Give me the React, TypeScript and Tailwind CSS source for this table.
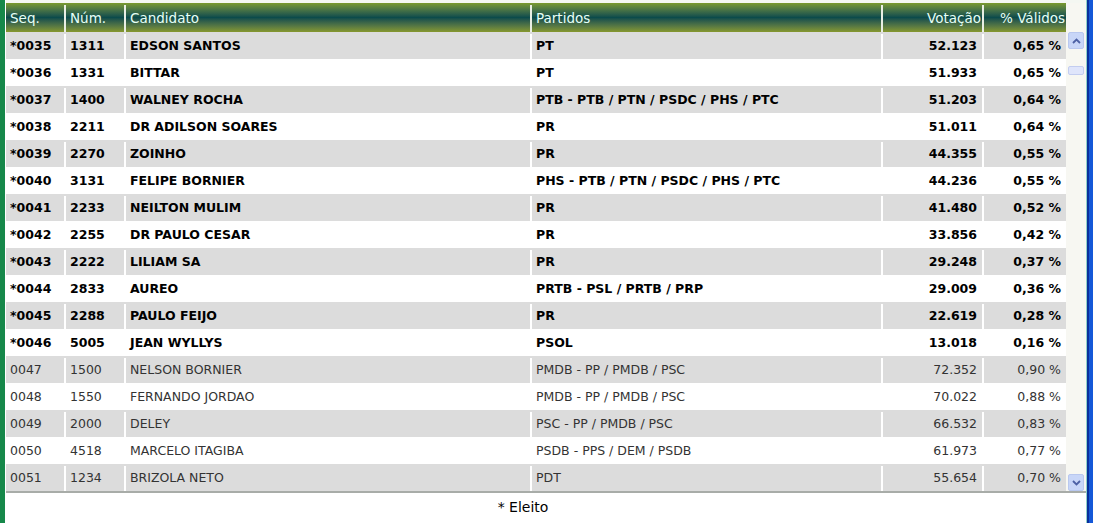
import React from "react";

type Row = {
  seq: string;
  num: string;
  nome: string;
  partido: string;
  votos: string;
  pct: string;
  eleito: boolean;
};

const rows: Row[] = [
  { seq: "*0035", num: "1311", nome: "EDSON SANTOS", partido: "PT", votos: "52.123", pct: "0,65 %", eleito: true },
  { seq: "*0036", num: "1331", nome: "BITTAR", partido: "PT", votos: "51.933", pct: "0,65 %", eleito: true },
  { seq: "*0037", num: "1400", nome: "WALNEY ROCHA", partido: "PTB - PTB / PTN / PSDC / PHS / PTC", votos: "51.203", pct: "0,64 %", eleito: true },
  { seq: "*0038", num: "2211", nome: "DR ADILSON SOARES", partido: "PR", votos: "51.011", pct: "0,64 %", eleito: true },
  { seq: "*0039", num: "2270", nome: "ZOINHO", partido: "PR", votos: "44.355", pct: "0,55 %", eleito: true },
  { seq: "*0040", num: "3131", nome: "FELIPE BORNIER", partido: "PHS - PTB / PTN / PSDC / PHS / PTC", votos: "44.236", pct: "0,55 %", eleito: true },
  { seq: "*0041", num: "2233", nome: "NEILTON MULIM", partido: "PR", votos: "41.480", pct: "0,52 %", eleito: true },
  { seq: "*0042", num: "2255", nome: "DR PAULO CESAR", partido: "PR", votos: "33.856", pct: "0,42 %", eleito: true },
  { seq: "*0043", num: "2222", nome: "LILIAM SA", partido: "PR", votos: "29.248", pct: "0,37 %", eleito: true },
  { seq: "*0044", num: "2833", nome: "AUREO", partido: "PRTB - PSL / PRTB / PRP", votos: "29.009", pct: "0,36 %", eleito: true },
  { seq: "*0045", num: "2288", nome: "PAULO FEIJO", partido: "PR", votos: "22.619", pct: "0,28 %", eleito: true },
  { seq: "*0046", num: "5005", nome: "JEAN WYLLYS", partido: "PSOL", votos: "13.018", pct: "0,16 %", eleito: true },
  { seq: "0047", num: "1500", nome: "NELSON BORNIER", partido: "PMDB - PP / PMDB / PSC", votos: "72.352", pct: "0,90 %", eleito: false },
  { seq: "0048", num: "1550", nome: "FERNANDO JORDAO", partido: "PMDB - PP / PMDB / PSC", votos: "70.022", pct: "0,88 %", eleito: false },
  { seq: "0049", num: "2000", nome: "DELEY", partido: "PSC - PP / PMDB / PSC", votos: "66.532", pct: "0,83 %", eleito: false },
  { seq: "0050", num: "4518", nome: "MARCELO ITAGIBA", partido: "PSDB - PPS / DEM / PSDB", votos: "61.973", pct: "0,77 %", eleito: false },
  { seq: "0051", num: "1234", nome: "BRIZOLA NETO", partido: "PDT", votos: "55.654", pct: "0,70 %", eleito: false },
];

const cols = "grid grid-cols-[60px_60px_406px_351px_101px_82px]";

export default function App() {
  return (
    <div
      className="flex h-[523px] w-[1093px] overflow-hidden bg-white"
      style={{ fontFamily: '"DejaVu Sans", Verdana, sans-serif' }}
    >
      {/* left frame */}
      <div className="w-[5px] bg-[#16884a]" />
      <div className="w-[1px] bg-white" />

      <div className="flex w-[1080px] flex-col">
        <div className="h-[3px] bg-[#f4f7f2]" />
        <div className="flex">
          {/* table */}
          <div className="w-[1060px]">
            <div
              className={`${cols} h-[29px] pt-[2px] text-[13.5px] text-[#e6fff6] bg-gradient-to-b from-[#7a9a2c] via-[#0b4b4b] to-[#86982c]`}
            >
              <div className="flex items-center border-r-2 border-[#e9eee4] pl-[4px]">Seq.</div>
              <div className="flex items-center border-r-2 border-[#e9eee4] pl-[4px]">Núm.</div>
              <div className="flex items-center border-r-2 border-[#e9eee4] pl-[4px]">Candidato</div>
              <div className="flex items-center border-r-2 border-[#e9eee4] pl-[4px]">Partidos</div>
              <div className="flex items-center justify-end border-r-2 border-[#e9eee4] pr-[1px]">Votação</div>
              <div className="flex items-center justify-end pr-[1px]">% Válidos</div>
            </div>
            {rows.map((r, i) => (
              <div
                key={r.seq}
                className={`${cols} h-[27px] pt-[2px] ${i % 2 === 0 ? "bg-[#dcdcdc]" : "bg-white"} ${
                  r.eleito ? "text-[12.5px] font-bold text-black" : "text-[12.5px] text-[#333333]"
                }`}
              >
                <div className="flex items-center border-r-2 border-white pl-[4px]">{r.seq}</div>
                <div className="flex items-center border-r-2 border-white pl-[4px]">{r.num}</div>
                <div className="flex items-center border-r-2 border-white pl-[4px]">{r.nome}</div>
                <div className="flex items-center border-r-2 border-white pl-[4px]">{r.partido}</div>
                <div className="flex items-center justify-end border-r-2 border-white pr-[5px]">{r.votos}</div>
                <div className="flex items-center justify-end pr-[5px]">{r.pct}</div>
              </div>
            ))}
          </div>

          {/* scrollbar */}
          <div className="flex w-[20px] flex-col bg-[#f7f7f2] pt-[29px]">
            <div className="mx-[2px] flex h-[17px] items-center justify-center rounded-[2px] border border-[#b9c8ef] bg-[#c8d6f8]">
              <svg width="9" height="6" viewBox="0 0 9 6">
                <path d="M1 5 L4.5 1.5 L8 5" fill="none" stroke="#4d61a5" strokeWidth="1.8" />
              </svg>
            </div>
            <div className="mx-[2px] mt-[17px] h-[9px] rounded-[2px] border border-[#c3cdf0] bg-[#dfe5fb]" />
            <div className="flex-1" />
            <div className="mx-[2px] flex h-[17px] items-center justify-center rounded-[2px] border border-[#b9c8ef] bg-[#c8d6f8]">
              <svg width="9" height="6" viewBox="0 0 9 6">
                <path d="M1 1 L4.5 4.5 L8 1" fill="none" stroke="#4d61a5" strokeWidth="1.8" />
              </svg>
            </div>
          </div>
        </div>

        {/* footer */}
        <div className="flex flex-1 items-center justify-center border-t-2 border-[#a8aca8] pb-[2px] pr-[46px]">
          <span className="text-[14px] text-black">* Eleito</span>
        </div>
      </div>

      {/* right window frame */}
      <div className="w-[1px] bg-[#8fd0c8]" />
      <div className="w-[2px] bg-[#0a2f9a]" />
      <div className="w-[4px] bg-[#1458d8]" />
    </div>
  );
}
